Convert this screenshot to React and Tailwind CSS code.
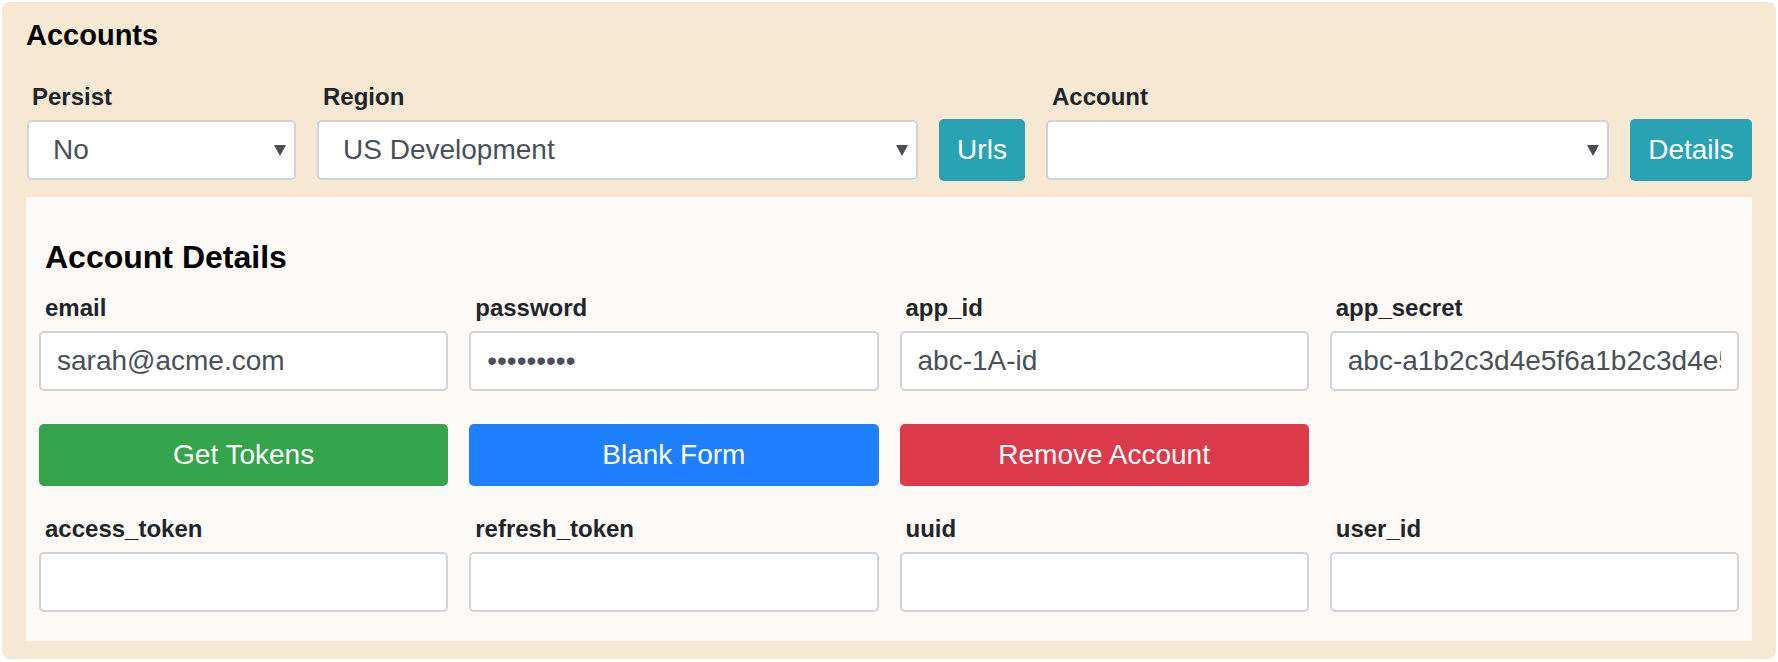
import { useState } from "react";

const labelCls =
  "block pl-[6px] mb-[5px] text-[24px] leading-[36px] font-bold text-[#212529]";
const inputCls =
  "block h-[60px] w-full rounded-[5px] border-2 border-[#d0d4da] bg-white px-[16px] text-[28px] text-[#495057] outline-none";

function FakeSelect({ value, width }) {
  return (
    <div
      className={`flex h-[60px] items-center justify-between rounded-[5px] border-2 border-[#d0d4da] bg-white pl-[24px] pr-[8px] mb-[1px] ${width}`}
    >
      <span className="text-[28px] text-[#495057]">{value}</span>
      <svg width="12" height="11" viewBox="0 0 12 11" aria-hidden="true">
        <polygon points="0,0 12,0 6,11" fill="#4a4e54" />
      </svg>
    </div>
  );
}

function Field({ label, value, type = "text" }) {
  return (
    <div>
      <label className={labelCls}>{label}</label>
      <input className={inputCls} type={type} value={value} readOnly />
    </div>
  );
}

export default function App() {
  const [account] = useState({
    email: "sarah@acme.com",
    password: "secret123",
    app_id: "abc-1A-id",
    app_secret: "abc-a1b2c3d4e5f6a1b2c3d4e5f6a1b2",
  });

  return (
    <div
      className="min-h-[662px] bg-white"
      style={{ fontFamily: '"Liberation Sans", Arial, sans-serif' }}
    >
      <div className="m-[2px] w-[1774px] rounded-[8px] bg-[#f7e8d3] pt-[16px] pb-[18px] pl-[24px] pr-[24px]">
        <h1 className="text-[29px] leading-[34px] font-bold text-black">
          Accounts
        </h1>

        {/* top controls */}
        <div className="mt-[27px] flex items-end gap-[21px] pl-[1px]">
          <div>
            <label className="block pl-[5px] mb-[5px] text-[24px] leading-[36px] font-bold text-[#212529]">
              Persist
            </label>
            <FakeSelect value="No" width="w-[269px]" />
          </div>
          <div>
            <label className="block pl-[6px] mb-[5px] text-[24px] leading-[36px] font-bold text-[#212529]">
              Region
            </label>
            <FakeSelect value="US Development" width="w-[601px]" />
          </div>
          <button className="h-[62px] w-[86px] rounded-[5px] bg-[#29a2b4] text-[28px] text-white">
            Urls
          </button>
          <div>
            <label className="block pl-[6px] mb-[5px] text-[24px] leading-[36px] font-bold text-[#212529]">
              Account
            </label>
            <FakeSelect value="" width="w-[563px]" />
          </div>
          <button className="h-[62px] w-[122px] rounded-[5px] bg-[#29a2b4] text-[28px] text-white">
            Details
          </button>
        </div>

        {/* details panel */}
        <div className="mt-[16px] bg-[#fdf9f7] px-[13px] pt-[41px] pb-[29px]">
          <h2 className="ml-[6px] text-[32px] leading-[38px] font-bold text-black">
            Account Details
          </h2>

          <div className="mt-[14px] grid grid-cols-4 gap-x-[21px]">
            <Field label="email" value={account.email} />
            <Field label="password" value={account.password} type="password" />
            <Field label="app_id" value={account.app_id} />
            <Field label="app_secret" value={account.app_secret} />
          </div>

          <div className="mt-[33px] grid grid-cols-4 gap-x-[21px]">
            <button className="h-[62px] rounded-[5px] bg-[#35a44c] text-[28px] text-white">
              Get Tokens
            </button>
            <button className="h-[62px] rounded-[5px] bg-[#1f80fd] text-[28px] text-white">
              Blank Form
            </button>
            <button className="h-[62px] rounded-[5px] bg-[#da3a4a] text-[28px] text-white">
              Remove Account
            </button>
            <div />
          </div>

          <div className="mt-[25px] grid grid-cols-4 gap-x-[21px]">
            <Field label="access_token" value="" />
            <Field label="refresh_token" value="" />
            <Field label="uuid" value="" />
            <Field label="user_id" value="" />
          </div>
        </div>
      </div>
    </div>
  );
}
